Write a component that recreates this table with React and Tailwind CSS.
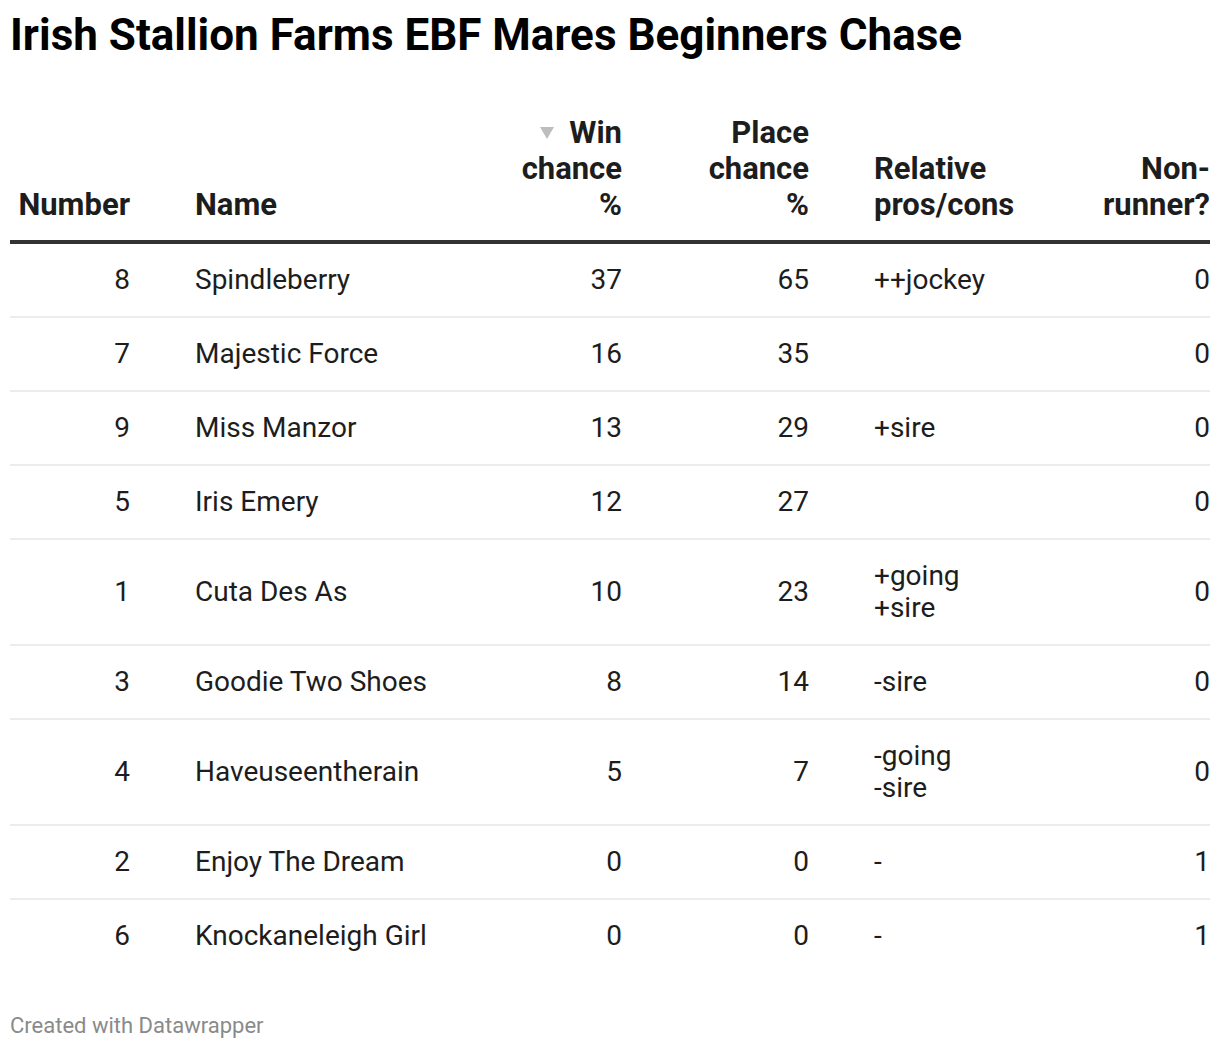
import React from "react";

const rows = [
  { num: 8, name: "Spindleberry", win: 37, place: 65, pros: ["++jockey"], nr: 0 },
  { num: 7, name: "Majestic Force", win: 16, place: 35, pros: [], nr: 0 },
  { num: 9, name: "Miss Manzor", win: 13, place: 29, pros: ["+sire"], nr: 0 },
  { num: 5, name: "Iris Emery", win: 12, place: 27, pros: [], nr: 0 },
  { num: 1, name: "Cuta Des As", win: 10, place: 23, pros: ["+going", "+sire"], nr: 0 },
  { num: 3, name: "Goodie Two Shoes", win: 8, place: 14, pros: ["-sire"], nr: 0 },
  { num: 4, name: "Haveuseentherain", win: 5, place: 7, pros: ["-going", "-sire"], nr: 0 },
  { num: 2, name: "Enjoy The Dream", win: 0, place: 0, pros: ["-"], nr: 1 },
  { num: 6, name: "Knockaneleigh Girl", win: 0, place: 0, pros: ["-"], nr: 1 },
];

const cols = "grid grid-cols-[175px_285px_162px_187px_261px_130px]";

function SortArrow() {
  return (
    <svg width="16" height="14" viewBox="0 0 16 14" className="inline-block mr-[14px] mb-[4px]">
      <polygon points="1,1 15,1 8,13" fill="#bdbdbd" />
    </svg>
  );
}

export default function App() {
  return (
    <div className="bg-white w-[1220px] min-h-[1048px] px-[10px] text-[#1d1d1d]" style={{ fontFamily: "Roboto, 'Liberation Sans', sans-serif" }}>
      <h1 className="pt-[9px] text-[44px] leading-[52px] font-bold text-black">
        Irish Stallion Farms EBF Mares Beginners Chase
      </h1>

      {/* header */}
      <div className={`${cols} mt-[54px] border-b-4 border-[#333] text-[31px] leading-[36px] font-bold text-[#1d1d1d]`}>
        <div className="flex items-end justify-end pr-[55px] pb-[17px]">Number</div>
        <div className="flex items-end pl-[10px] pb-[17px]">Name</div>
        <div className="flex items-end justify-end text-right pr-[10px] pb-[17px]">
          <span>
            <SortArrow />Win
            <br />
            chance
            <br />%
          </span>
        </div>
        <div className="flex items-end justify-end text-right pr-[10px] pb-[17px]">
          <span>
            Place
            <br />
            chance
            <br />%
          </span>
        </div>
        <div className="flex items-end pl-[55px] pb-[17px]">
          <span>
            Relative
            <br />
            pros/cons
          </span>
        </div>
        <div className="flex items-end justify-end text-right pb-[17px]">
          <span>
            Non-
            <br />
            runner?
          </span>
        </div>
      </div>

      {/* rows */}
      {rows.map((r, i) => (
        <div
          key={r.num}
          className={`${cols} text-[28px] leading-[32px] ${i < rows.length - 1 ? "border-b-2 border-[#ececec]" : ""}`}
        >
          <div className="flex items-center justify-end pr-[55px] py-[20px]">{r.num}</div>
          <div className="flex items-center pl-[10px] py-[20px]">{r.name}</div>
          <div className="flex items-center justify-end pr-[10px] py-[20px]">{r.win}</div>
          <div className="flex items-center justify-end pr-[10px] py-[20px]">{r.place}</div>
          <div className="flex flex-col justify-center pl-[55px] py-[20px]">
            {r.pros.map((p) => (
              <span key={p}>{p}</span>
            ))}
          </div>
          <div className="flex items-center justify-end py-[20px]">{r.nr}</div>
        </div>
      ))}

      <div className="mt-[41px] text-[22px] leading-[26px] text-[#8a8a8a]">Created with Datawrapper</div>
    </div>
  );
}
